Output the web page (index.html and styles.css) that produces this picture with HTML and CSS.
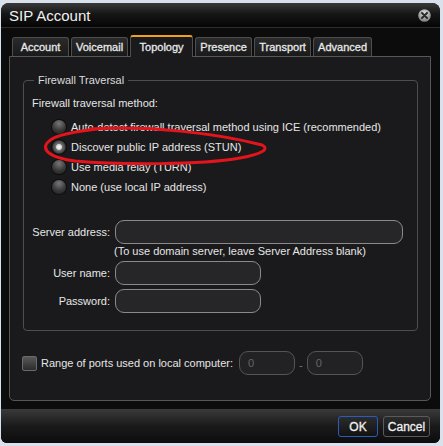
FILE: index.html
```html
<!DOCTYPE html>
<html lang="en">
<head>
    <meta charset="UTF-8">
    <title>SIP Account</title>
    <link rel="stylesheet" href="styles.css">
</head>
<body>
<div class="window">
    <div class="titlebar">
        <span class="title">SIP Account</span>
        <span class="close-btn">
            <svg width="13" height="13" viewBox="0 0 13 13">
                <defs>
                    <radialGradient id="cg" cx="50%" cy="35%" r="65%">
                        <stop offset="0" stop-color="#e6e6e6"/>
                        <stop offset="1" stop-color="#7a7a7a"/>
                    </radialGradient>
                </defs>
                <circle cx="6.5" cy="6.5" r="6.3" fill="url(#cg)"/>
                <path d="M4 4 L9 9 M9 4 L4 9" stroke="#2a2a2a" stroke-width="2" stroke-linecap="round"/>
            </svg>
        </span>
    </div>

    <div class="tabs">
        <div class="tab">Account</div>
        <div class="tab">Voicemail</div>
        <div class="tab active">Topology</div>
        <div class="tab">Presence</div>
        <div class="tab">Transport</div>
        <div class="tab">Advanced</div>
    </div>

    <div class="panel">
        <fieldset class="group">
            <legend>Firewall Traversal</legend>
            <p class="method-label">Firewall traversal method:</p>
            <div class="radios">
                <label class="radio"><span class="dot"></span>Auto-detect firewall traversal method using ICE (recommended)</label>
                <label class="radio"><span class="dot checked"></span>Discover public IP address (STUN)</label>
                <label class="radio"><span class="dot"></span>Use media relay (TURN)</label>
                <label class="radio"><span class="dot"></span>None (use local IP address)</label>
            </div>

            <div class="form">
                <div class="row">
                    <span class="lbl">Server address:</span>
                    <span class="field wide"></span>
                </div>
                <div class="hint">(To use domain server, leave Server Address blank)</div>
                <div class="row">
                    <span class="lbl">User name:</span>
                    <span class="field"></span>
                </div>
                <div class="row">
                    <span class="lbl">Password:</span>
                    <span class="field"></span>
                </div>
            </div>
        </fieldset>

        <div class="ports">
            <span class="checkbox"></span>
            <span class="ports-label">Range of ports used on local computer:</span>
            <span class="port">0</span>
            <span class="dash">-</span>
            <span class="port">0</span>
        </div>
    </div>

    <div class="footer">
        <button class="btn ok">OK</button>
        <button class="btn cancel">Cancel</button>
    </div>

    <!-- hand-drawn marker around the STUN option -->
    <svg class="scribble" width="232" height="48" viewBox="0 0 232 48">
        <path d="M49 6 C109 2 179 11 221 22 C229 26 221 31 199 35 C159 42 79 42 34 38 C9 35 1 27 6 20 C11 13 29 8 69 5"
              fill="none" stroke="#e3141b" stroke-width="3" stroke-linecap="round"/>
    </svg>
</div>
</body>
</html>
```

FILE: styles.css
```css
body {
    margin: 0;
    background: #d9e1ec;
    font-family: "Liberation Sans", Arial, sans-serif;
    font-size: 11px;
    color: #e6e6e6;
}
.window {
    position: relative;
    margin: 3px 0 0 1px;
    width: 439px;
    height: 440px;
    border-radius: 8px 8px 6px 6px;
    background: #0c0c0c;
    display: flex;
    flex-direction: column;
    overflow: hidden;
}
.titlebar {
    height: 24px;
    padding: 0 9px 0 8px;
    display: flex;
    align-items: center;
    justify-content: space-between;
    background: linear-gradient(#3a3a3a, #161616 45%, #050505);
    border-bottom: 1px solid #2e2e2e;
}
.title {
    font-size: 15px;
    color: #f0f0f0;
    padding-top: 1px;
}
.close-btn {
    display: flex;
}
.tabs {
    display: flex;
    align-items: flex-end;
    gap: 2px;
    padding-left: 11px;
    height: 28px;
}
.tab {
    height: 18px;
    min-width: 47px;
    padding: 0 4px;
    line-height: 18px;
    text-align: center;
    border: 1px solid #4e4e4e;
    border-bottom: none;
    border-radius: 3px 3px 0 0;
    background: linear-gradient(#2a2a2a, #1a1a1a);
    color: #e8e8e8;
    -webkit-text-stroke: 0.3px #e8e8e8;
}
.tab.active {
    height: 20px;
    padding: 0 7px;
    line-height: 21px;
    background: #1a1a1c;
    border-top: 2px solid #f0a020;
    position: relative;
    top: 1px;
}
.panel {
    margin-left: 8px;
    width: 422px;
    height: 345px;
    border: 1px solid #575757;
    border-radius: 0 0 5px 5px;
    background: #1a1a1c;
    box-sizing: border-box;
    padding: 17px 12px 0 13px;
}
.group {
    margin: 0;
    padding: 0 0 0 8px;
    height: 257px;
    box-sizing: border-box;
    border: 1px solid #4e4e4e;
    border-radius: 4px;
}
.group legend {
    padding: 0 4px;
    margin-left: 2px;
    color: #dcdcdc;
}
.method-label {
    margin: 11px 0 0 0;
}
.radios {
    margin: 11px 0 0 20px;
    display: flex;
    flex-direction: column;
    gap: 6px;
}
.radio {
    display: flex;
    align-items: center;
    gap: 5px;
    height: 14px;
}
.dot {
    width: 14px;
    height: 14px;
    border-radius: 50%;
    background: radial-gradient(circle at 50% 25%, #777, #3a3a3a 55%, #1c1c1c);
    box-shadow: 0 0 0 1px #0e0e0e;
}
.dot.checked {
    background: radial-gradient(circle, #fafafa 0, #d8d8d8 2.5px, #707070 3.5px, #444 6px, #222 7px);
}
.form {
    margin-top: 26px;
    display: flex;
    flex-direction: column;
    gap: 4px;
}
.row {
    display: flex;
    align-items: center;
    gap: 5px;
}
.lbl {
    width: 78px;
    text-align: right;
}
.field {
    width: 144px;
    height: 22px;
    border: 1px solid #8a8a8a;
    border-radius: 9px;
    background: #262628;
}
.field.wide {
    width: 286px;
}
.hint {
    margin: -3px 0 0 82px;
}
.ports {
    margin-top: 20px;
    margin-left: -1px;
    display: flex;
    align-items: center;
}
.checkbox {
    width: 13px;
    height: 13px;
    border: 1px solid #6a6a6a;
    border-radius: 2px;
    background: linear-gradient(#585858, #2c2c2c);
    margin-right: 4px;
}
.ports-label {
    margin-right: 6px;
}
.port {
    width: 46px;
    height: 22px;
    line-height: 22px;
    padding-left: 8px;
    border: 1px solid #555;
    border-radius: 9px;
    background: #222224;
    color: #666;
}
.dash {
    margin: 0 4px;
    color: #777;
    padding-top: 3px;
}
.footer {
    flex: 1;
    margin-top: 8px;
    display: flex;
    justify-content: flex-end;
    align-items: flex-start;
    gap: 5px;
    padding: 7px 10px 0 0;
    background: linear-gradient(#3a3a3c, #1a1a1a 50%, #0c0c0c);
}
.btn {
    height: 21px;
    padding: 0;
    border: 1px solid #5a5a5a;
    border-radius: 3px;
    background: linear-gradient(#2c2c2c, #121212);
    color: #f0f0f0;
    font-family: "Liberation Sans", Arial, sans-serif;
    font-size: 12px;
    -webkit-text-stroke: 0.3px #f0f0f0;
}
.btn.ok {
    width: 40px;
    border-color: #2a5cc0;
}
.btn.cancel {
    width: 47px;
}
.scribble {
    position: absolute;
    left: 40px;
    top: 120px;
}
```
